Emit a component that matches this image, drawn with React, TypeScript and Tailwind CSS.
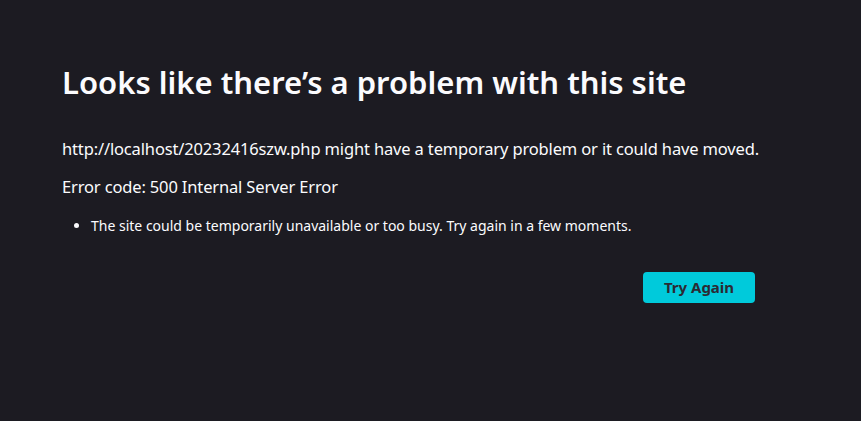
import React from 'react';

function App() {
  return (
    <div
      className="min-h-screen w-full bg-[#1c1b22] text-[#fbfbfe]"
      style={{ fontFamily: '"Noto Sans", "Open Sans", sans-serif' }}
    >
      <div className="w-[693px] pl-[62px] pt-[62px] box-content">
        <h1 className="whitespace-nowrap text-[31px] font-semibold leading-[40px] tracking-[0px]">
          Looks like there’s a problem with this site
        </h1>
        <p className="mt-[35px] whitespace-nowrap text-[16.5px] leading-[24px] tracking-[-0.15px]">
          http://localhost/20232416szw.php might have a temporary problem or it could have moved.
        </p>
        <p className="mt-[14px] whitespace-nowrap text-[16.5px] leading-[24px] tracking-[-0.15px]">
          Error code: 500 Internal Server Error
        </p>
        <ul className="mt-[17px] list-disc pl-[29px] text-[14px] leading-[20px] tracking-[0px]">
          <li className="whitespace-nowrap">The site could be temporarily unavailable or too busy. Try again in a few moments.</li>
        </ul>
        <div className="mt-[36px] flex justify-end">
          <button className="h-[31px] w-[112px] rounded-[4px] bg-[#00cadb] text-[15px] font-bold text-[#2b2a33]">
            Try Again
          </button>
        </div>
      </div>
    </div>
  );
}

export default App;
